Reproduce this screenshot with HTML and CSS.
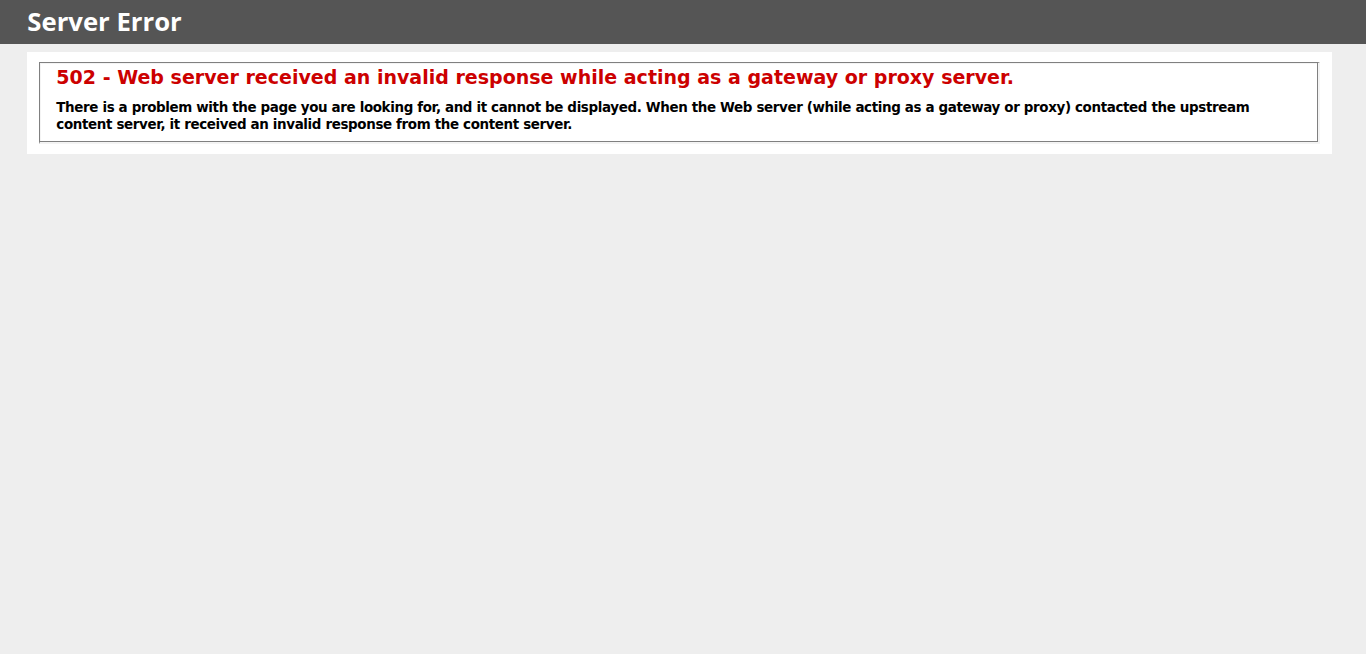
FILE: index.html
```html
<!DOCTYPE html>
<html>
<head>
<meta charset="utf-8">
<title>502 - Web server received an invalid response while acting as a gateway or proxy server.</title>
<link rel="stylesheet" href="styles.css">
</head>
<body>
<div id="header"><h1>Server Error</h1></div>
<div id="content">
 <div class="content-container"><fieldset>
  <h2>502 - Web server received an invalid response while acting as a gateway or proxy server.</h2>
  <h3>There is a problem with the page you are looking for, and it cannot be displayed. When the Web server (while acting as a gateway or proxy) contacted the upstream content server, it received an invalid response from the content server.</h3>
 </fieldset></div>
</div>
</body>
</html>
```

FILE: styles.css
```css
body{margin:0;font-size:.7em;font-family:"DejaVu Sans", Verdana, sans-serif;background:#EEEEEE;}
fieldset{padding:3px 15px 9px 16px;margin:0 2px;border-style:solid;border-width:1px 2px 2px 1px;border-color:#808080 #f4f4f4 #f4f4f4 #808080;box-shadow:inset -1px -1px 0 #808080, inset 1px 1px 0 #f4f4f4;}
h1{font-size:25.7px;line-height:32px;margin:0;color:#FFF;}
h2{font-size:1.7em;line-height:23px;margin:0;color:#CC0000;}
h3{font-size:1.2em;line-height:17px;letter-spacing:-0.36px;margin:10px 0 0 0;color:#000000;}
#header{width:96%;margin:0;padding:6px 2% 6px 2%;font-family:"Open Sans", "DejaVu Sans", sans-serif;color:#FFF;background-color:#555555;}
#content{margin:0 0 0 2%;position:relative;}
.content-container{background:#FFF;width:96%;margin-top:8px;padding:10px;position:relative;}
```
